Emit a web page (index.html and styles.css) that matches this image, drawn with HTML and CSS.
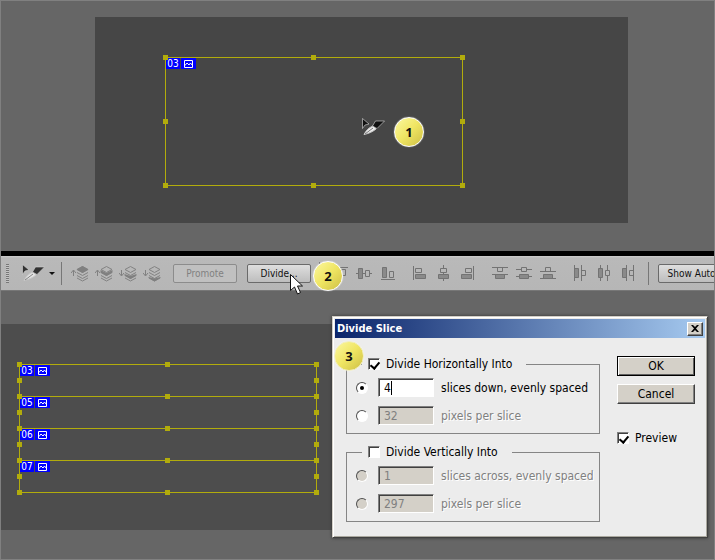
FILE: index.html
```
<!DOCTYPE html>
<html lang="en">
<head>
<meta charset="utf-8">
<meta name="viewport" content="width=device-width, initial-scale=1">
<title>Divide Slice</title>
<link rel="stylesheet" href="styles.css">
</head>
<body>
<svg class="defs" aria-hidden="true">
  <defs>
    <symbol id="pic" viewBox="0 0 9 8"><path d="M.5 .5h8v7h-8z" fill="none" stroke="#fff"/><path d="M1 5.500l2-2.500 2 2 1.500-2 2 2.500" fill="none" stroke="#fff"/></symbol>
    <symbol id="knife" viewBox="0 0 24 18">
      <path d="M1.500 .5v10l2.500-3.500 4-1z" fill="#111" stroke="#ddd" stroke-width=".6"/>
      <path d="M3 16.500c2-4 5-7 9-8.500l3 3c-3 2.500-7 4.500-12 5.500z" fill="#eee" stroke="#ccc"/>
      <path d="M4 16l8-6" stroke="#777" fill="none"/>
      <path d="M11.500 8l3-5h9l-7.500 7.500z" fill="#111" stroke="#ddd" stroke-width=".6"/>
    </symbol>
    <symbol id="stack" viewBox="0 0 13 17">
      <path d="M6.500 1.500l5.500 3-5.500 3-5.500-3zM1 7.500l5.500 3 5.500-3M1 10.500l5.500 3 5.500-3M1 13l5.500 3 5.500-3" fill="none" stroke="#828282"/>
    </symbol>
  </defs>
</svg>

<main class="page">
  <section class="stage">
    <div class="canvas">
      <div class="slice slice-single">
        <span class="tag"><b>03</b><i><svg><use href="#pic"/></svg></i></span>
        <span class="h tl"></span><span class="h tc"></span><span class="h tr"></span><span class="h ml"></span><span class="h mr"></span><span class="h bl"></span><span class="h bc"></span><span class="h br"></span>
      </div>
      <svg class="knife-cursor"><use href="#knife"/></svg>
      <span class="step step-1">1</span>
    </div>
  </section>

  <header class="toolbar">
    <span class="grip"></span>
    <svg class="tool-knife"><use href="#knife"/></svg>
    <svg class="caret" viewBox="0 0 6 3"><path d="M0 0h6l-3 3z" fill="#111"/></svg>
    <span class="sep"></span>
    <div class="group layers">
      <svg viewBox="0 0 18 17"><use href="#stack" x="5" width="13" height="17"/><path d="M11.500 1l6 3.500-6 3.500-6-3.500z" fill="#808080"/><path d="M2.500 11V5.500M0 8l2.500-3 2.500 3" fill="none" stroke="#808080"/></svg>
      <svg viewBox="0 0 18 17"><use href="#stack" x="5" width="13" height="17"/><path d="M5.500 5l6 3 6-3v2.500l-6 3.500-6-3.500z" fill="#808080"/><path d="M2.500 11V5.500M0 8l2.500-3 2.500 3" fill="none" stroke="#808080"/></svg>
      <svg viewBox="0 0 18 17"><use href="#stack" x="5" width="13" height="17"/><path d="M5.500 9l6 2 6-2v1.500l-6 3.500-6-3.500z" fill="#808080"/><path d="M2.500 5v5.500M0 8l2.500 3 2.500-3" fill="none" stroke="#808080"/></svg>
      <svg viewBox="0 0 18 17"><use href="#stack" x="5" width="13" height="17"/><path d="M5.500 12l6 1.500 6-1.500v1l-6 3.500-6-3.500z" fill="#808080"/><path d="M2.500 5v5.500M0 8l2.500 3 2.500-3" fill="none" stroke="#808080"/></svg>
    </div>
    <button class="tb" type="button" disabled>Promote</button>
    <button class="tb" type="button">Divide...</button>
    <span class="sep sep-align"></span>
    <div class="group">
      <svg class="al" viewBox="0 0 16 16"><path d="M0 2.500h16M9.500 4.500h4v6h-4z"/><path class="f" d="M2.500 4.500h4v10h-4z"/></svg>
      <svg class="al" viewBox="0 0 16 16"><path d="M0 8.500h2M7 8.500h2M14 8.500h2M9.500 5.500h4v6h-4z"/><path class="f" d="M2.500 3.500h4v10h-4z"/></svg>
      <svg class="al" viewBox="0 0 16 16"><path d="M1 14.500h14M9.500 6.500h4v6h-4z"/><path class="f" d="M2.500 2.500h4v10h-4z"/></svg>
    </div>
    <div class="group">
      <svg class="al" viewBox="0 0 16 16"><path d="M1.500 1v14M3.500 3.500h6v4h-6z"/><path class="f" d="M3.500 9.500h10v4h-10z"/></svg>
      <svg class="al" viewBox="0 0 16 16"><path d="M7.500 0v3M7.500 7v2M7.500 14v2M4.500 3.500h6v4h-6z"/><path class="f" d="M2.500 9.500h10v4h-10z"/></svg>
      <svg class="al" viewBox="0 0 16 16"><path d="M13.500 1v14M5.500 3.500h6v4h-6z"/><path class="f" d="M1.500 9.500h10v4h-10z"/></svg>
    </div>
    <div class="group">
      <svg class="al" viewBox="0 0 16 16"><path d="M0 2.500h16M0 9.500h16M5.500 2.500h5v4h-5z"/><path class="f" d="M3.500 9.500h9v4h-9z"/></svg>
      <svg class="al" viewBox="0 0 16 16"><path d="M0 4.500h5M11 4.500h5M0 11.500h3M13 11.500h3M5.500 2.500h5v4h-5z"/><path class="f" d="M3.500 9.500h9v4h-9z"/></svg>
      <svg class="al" viewBox="0 0 16 16"><path d="M0 6.500h16M0 13.500h16M5.500 2.500h5v4h-5z"/><path class="f" d="M3.500 9.500h9v4h-9z"/></svg>
    </div>
    <div class="group">
      <svg class="al" viewBox="0 0 16 16"><path d="M2.500 0v16M9.500 0v16M9.500 5.500h4v5h-4z"/><path class="f" d="M2.500 3.500h4v9h-4z"/></svg>
      <svg class="al" viewBox="0 0 16 16"><path d="M4.500 0v3M4.500 13v3M11.500 0v5M11.500 11v5M9.500 5.500h4v5h-4z"/><path class="f" d="M2.500 3.500h4v9h-4z"/></svg>
      <svg class="al" viewBox="0 0 16 16"><path d="M6.500 0v16M13.500 0v16M9.500 5.500h4v5h-4z"/><path class="f" d="M2.500 3.500h4v9h-4z"/></svg>
    </div>
    <span class="sep"></span>
    <button class="tb tb-wide" type="button">Show Auto Slices</button>
    <span class="step step-2">2</span>
    <svg class="pointer" viewBox="0 0 13 21"><path d="M.5 .5v16l4-3.500 3 7 3-1.500-3-6.500h5z" fill="#fff" stroke="#111"/></svg>
  </header>

  <section class="result">
    <div class="panel">
      <div class="stack">
        <div class="slice"><span class="tag"><b>03</b><i><svg><use href="#pic"/></svg></i></span><span class="h tl"></span><span class="h tc"></span><span class="h tr"></span><span class="h ml"></span><span class="h mr"></span><span class="h bl"></span><span class="h bc"></span><span class="h br"></span></div>
        <div class="slice"><span class="tag"><b>05</b><i><svg><use href="#pic"/></svg></i></span><span class="h tl"></span><span class="h tc"></span><span class="h tr"></span><span class="h ml"></span><span class="h mr"></span><span class="h bl"></span><span class="h bc"></span><span class="h br"></span></div>
        <div class="slice"><span class="tag"><b>06</b><i><svg><use href="#pic"/></svg></i></span><span class="h tl"></span><span class="h tc"></span><span class="h tr"></span><span class="h ml"></span><span class="h mr"></span><span class="h bl"></span><span class="h bc"></span><span class="h br"></span></div>
        <div class="slice"><span class="tag"><b>07</b><i><svg><use href="#pic"/></svg></i></span><span class="h tl"></span><span class="h tc"></span><span class="h tr"></span><span class="h ml"></span><span class="h mr"></span><span class="h bl"></span><span class="h bc"></span><span class="h br"></span></div>
      </div>
    </div>

    <form class="dialog">
      <div class="title"><span>Divide Slice</span>
        <button class="close" type="button" aria-label="Close"><svg viewBox="0 0 8 7"><path d="M0 0h2l2 2 2-2h2L5 3.500 8 7H6L4 5 2 7H0l3-3.500z"/></svg></button>
      </div>
      <div class="body">
        <div class="fields">
          <fieldset>
            <legend><input type="checkbox" id="hor" checked><label for="hor">Divide Horizontally Into</label></legend>
            <div class="row"><input type="radio" name="h" id="h1" aria-label="By slice count" checked><input type="text" id="down" value="4"><label for="down">slices down, evenly spaced</label><span class="text-caret"></span></div>
            <div class="row off"><input type="radio" name="h" id="h2" aria-label="By pixels"><input type="text" id="hpx" value="32" disabled><label for="hpx">pixels per slice</label></div>
          </fieldset>
          <fieldset>
            <legend><input type="checkbox" id="ver"><label for="ver">Divide Vertically Into</label></legend>
            <div class="row off"><input type="radio" name="v" id="v1" aria-label="By slice count" disabled><input type="text" id="across" value="1" disabled><label for="across">slices across, evenly spaced</label></div>
            <div class="row off"><input type="radio" name="v" id="v2" aria-label="By pixels" disabled><input type="text" id="vpx" value="297" disabled><label for="vpx">pixels per slice</label></div>
          </fieldset>
        </div>
        <div class="actions">
          <button class="btn default" type="button">OK</button>
          <button class="btn" type="button">Cancel</button>
          <div class="preview"><input type="checkbox" id="pre" checked><label for="pre">Preview</label></div>
        </div>
      </div>
      <span class="step step-3">3</span>
    </form>
  </section>
</main>
</body>
</html>
```
FILE: styles.css
```
* { box-sizing: border-box; }

body {
  margin: 0;
  background: #666;
  font-family: "DejaVu Sans Condensed", "DejaVu Sans", sans-serif;
  font-size: 12px;
  color: #000;
}

svg { display: block; flex: none; }
.defs { position: absolute; width: 0; height: 0; }

.page {
  display: flex;
  flex-direction: column;
  min-height: 100vh;
  border: 1px solid #808080;
  overflow: hidden;
}

/* Upper canvas */
.stage { padding: 16px 86px 28px 94px; }
.canvas { position: relative; height: 206px; background: #464646; }

.slice { position: relative; border: 1px solid #b2ac0c; }
.slice-single { position: absolute; left: 70px; top: 40px; width: 298px; height: 129px; }

.h { position: absolute; width: 5px; height: 5px; background: #b2ac0c; }
.tl, .tc, .tr { top: -3px; }
.ml, .mr { top: calc(50% - 3px); }
.bl, .bc, .br { bottom: -3px; }
.tl, .ml, .bl { left: -3px; }
.tc, .bc { left: calc(50% - 3px); }
.tr, .mr, .br { right: -3px; }

.tag { display: flex; gap: 1px; width: 30px; height: 11px; }
.tag b, .tag i { display: flex; align-items: center; justify-content: center; background: #00f; }
.tag b { width: 14px; font: 10px/11px "DejaVu Sans Condensed", sans-serif; color: #fff; }
.tag i { width: 15px; }
.tag svg { width: 9px; height: 8px; }

.knife-cursor { position: absolute; left: 266px; top: 101px; width: 24px; height: 18px; }

.step {
  position: absolute;
  display: flex;
  align-items: center;
  justify-content: center;
  width: 30px;
  height: 30px;
  border: 1px solid #fff;
  border-radius: 50%;
  background: linear-gradient(135deg, #fcf8a0, #efe562 50%, #cdbf45);
  box-shadow: 0 0 1px #fff;
  font: bold 13px "Open Sans", sans-serif;
  color: #111;
  z-index: 3;
}
.step-1 { left: 299px; top: 100px; }
.step-2 { left: 312px; top: 5px; }
.step-3 { left: 1px; top: 24px; border-color: #f2efc0; }

/* Options bar */
.toolbar {
  position: relative;
  display: flex;
  align-items: center;
  height: 40px;
  padding-left: 5px;
  border-top: 5px solid #000;
  border-bottom: 1px solid #777;
  background: linear-gradient(#ccc, #b9b9b9 2px, #b6b6b6);
}
.toolbar > * { flex: none; }
.grip { width: 3px; height: 19px; background: repeating-linear-gradient(#777 0 1px, #c4c4c4 1px 2px); }
.tool-knife { width: 24px; height: 18px; margin-left: 12px; opacity: .8; }
.caret { width: 6px; height: 3px; margin-left: 4px; }
.sep { width: 1px; height: 23px; margin: 0 9px 0 6px; background: #777; }
.group { display: flex; gap: 8px; margin-left: 16px; }
.layers { gap: 6px; margin-left: 0; }
.layers svg { width: 18px; height: 17px; }
.al { width: 16px; height: 16px; fill: none; stroke: #737373; }
.al .f { fill: #8a8a8a; }
.group + .sep { margin-left: 12px; }
.tb {
  width: 64px;
  height: 19px;
  margin-left: 10px;
  padding: 0;
  border: 1px solid #6a6a6a;
  border-radius: 2px;
  background: linear-gradient(#dedede, #bdbdbd);
  font: 10px "DejaVu Sans Condensed", sans-serif;
  color: #111;
}
.layers + .tb { margin-left: 12px; }
.tb:disabled { border-color: #8c8c8c; background: #c0c0c0; color: #808080; }
.sep + .tb { margin-left: 0; }
.tb-wide { width: 96px; }
.tb + .sep-align { margin: 0 0 0 8px; }
.sep-align + .group { margin-left: 12px; }
.pointer { position: absolute; left: 289px; top: 18px; width: 13px; height: 21px; z-index: 4; }

/* Divided result */
.result { position: relative; flex: 1; padding: 33px 0 29px; }
.panel { width: 65%; height: 206px; padding: 40px 0 0 18px; background: #4d4d4d; }
.stack { width: 298px; }
.stack .slice { height: 33px; }
.stack .slice + .slice { margin-top: -1px; }

.dialog {
  position: absolute;
  left: 331px;
  top: 25px;
  width: 376px;
  border: 1px solid;
  border-color: #d4d0c8 #404040 #404040 #d4d0c8;
  box-shadow: inset 1px 1px #fff, inset -1px -1px #aaa89f, 0 0 3px #333;
  background: #ececec;
  padding: 2px;
}
.title {
  display: flex;
  align-items: center;
  justify-content: space-between;
  height: 19px;
  padding: 0 2px;
  background: linear-gradient(90deg, #0a246a, #a6caf0);
  color: #fff;
  font: bold 11px "DejaVu Sans Condensed", sans-serif;
}
.close, .btn {
  border: 1px solid;
  border-color: #fff #404040 #404040 #fff;
  box-shadow: inset -1px -1px #808080;
  background: #d4d0c8;
  padding: 0;
}
.close { display: grid; place-items: center; width: 16px; height: 14px; }
.close svg { width: 8px; height: 7px; }

.body { display: flex; gap: 17px; padding: 18px 10px 13px 11px; }
.fields { flex: 1; display: flex; flex-direction: column; gap: 10px; }
fieldset {
  min-width: 0;
  margin: 0;
  padding: 6px 0 8px 9px;
  border: 1px solid #858585;
}
legend { display: flex; align-items: center; gap: 6px; height: 16px; margin-left: 6px; padding: 0 14px 0 6px; }
.row { position: relative; display: flex; align-items: center; height: 19px; }
.row + .row { margin-top: 9px; }
.row label { margin-left: 7px; white-space: nowrap; }
.off label { color: #808080; text-shadow: 1px 1px #fff; }

input { appearance: none; margin: 0; flex: none; font: inherit; }
input[type="text"] {
  width: 56px;
  height: 19px;
  margin-left: 10px;
  padding: 0 5px;
  border: 1px solid;
  border-color: #808080 #fff #fff #808080;
  box-shadow: inset 1px 1px #404040;
  background: #fff;
  border-radius: 0;
}
input[type="text"]:disabled { background: #d4d0c8; color: #808080; }
.text-caret { position: absolute; left: 35px; top: 3px; width: 1px; height: 14px; background: #000; }

input[type="checkbox"] {
  width: 12px;
  height: 12px;
  border: 1px solid;
  border-color: #808080 #fff #fff #808080;
  box-shadow: inset 1px 1px #404040;
  background: #fff;
}
input[type="checkbox"]:checked::after {
  content: "";
  display: block;
  width: 4px;
  height: 7px;
  margin: 1px 0 0 3px;
  border: solid #000;
  border-width: 0 2px 2px 0;
  transform: rotate(40deg);
}
input[type="radio"] {
  display: grid;
  place-items: center;
  width: 12px;
  height: 12px;
  border: 1px solid;
  border-color: #505050 #fff #fff #505050;
  border-radius: 50%;
  background: #fff;
}
input[type="radio"]:disabled { background: #d4d0c8; }
input[type="radio"]:checked::after { content: ""; width: 4px; height: 4px; border-radius: 50%; background: #000; }

.actions { width: 78px; display: flex; flex-direction: column; }
.btn { height: 20px; margin-bottom: 8px; font: inherit; }
.default { border-color: #000; box-shadow: inset 1px 1px #fff, inset -1px -1px #606060; }
.preview { display: flex; align-items: center; gap: 6px; margin-top: 19px; }
```
